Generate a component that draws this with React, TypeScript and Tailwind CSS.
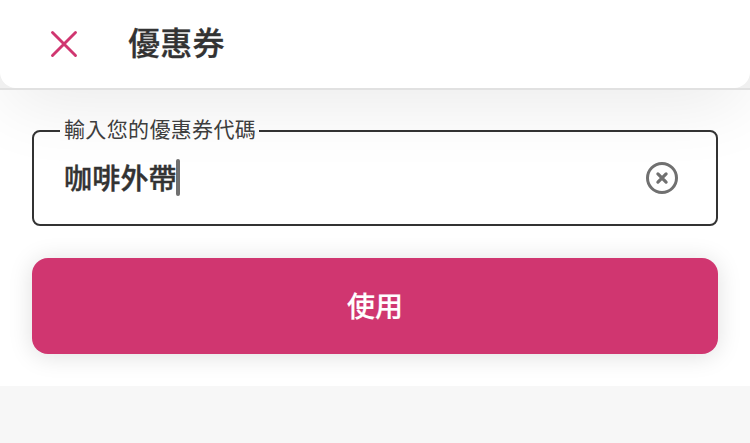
import { useState } from "react";

function CloseIcon() {
  return (
    <svg width="28" height="28" viewBox="0 0 28 28" fill="none" stroke="#d03670" strokeWidth="2.9" strokeLinecap="round">
      <path d="M2.5 2.5 25.5 25.5M25.5 2.5 2.5 25.5" />
    </svg>
  );
}

function ClearIcon() {
  return (
    <svg width="34" height="34" viewBox="0 0 34 34" fill="none" stroke="#707070" strokeWidth="3">
      <circle cx="17" cy="17" r="14.5" />
      <path strokeLinecap="round" strokeWidth="3.2" d="M12.9 12.9 21.1 21.1M21.1 12.9 12.9 21.1" />
    </svg>
  );
}

export default function App() {
  const [code, setCode] = useState("咖啡外帶");

  return (
    <div className="flex h-[443px] w-[750px] flex-col overflow-hidden bg-[#f7f7f7] font-['Noto_Sans_CJK_TC',sans-serif] text-[#333333]">
      <div className="relative z-10 h-[90px] shrink-0 border-b-2 border-[#e1e1e1] bg-[#f0f0f0] shadow-[0_20px_72px_-8px_rgba(0,0,0,0.09)]">
        <header className="flex h-[88px] items-center gap-[50px] rounded-b-2xl bg-white pl-[50px]">
          <button aria-label="關閉">
            <CloseIcon />
          </button>
          <h1 className="pb-[6px] text-[32px] leading-none font-medium tracking-[0.2px] [-webkit-text-stroke:0.3px_#333333]">優惠券</h1>
        </header>
      </div>

      <main className="h-[296px] shrink-0 bg-white px-8 pt-[29px]">
        <fieldset className="h-[107px] rounded-lg border-2 border-[#333333] pr-[37px] pl-[26px]">
          <legend className="h-6 pr-[3px] pl-1 text-[21px] leading-[19px] tracking-[0.35px] text-[#404040]">輸入您的優惠券代碼</legend>
          <div className="flex h-[69px] items-center justify-between">
            <div className="flex items-center pl-1">
              <span className="pb-[2px] text-[28px] leading-none font-medium tracking-[0.2px] [-webkit-text-stroke:0.4px_#333333]">{code}</span>
              {code && <span className="-ml-px h-[37px] w-1 rounded-sm bg-[#707070]" />}
            </div>
            <button onClick={() => setCode("")} aria-label="清除">
              <ClearIcon />
            </button>
          </div>
        </fieldset>

        <button className="mt-8 flex h-24 w-full items-center justify-center rounded-2xl bg-[#d03670] pb-[2px] text-[28px] font-medium text-white shadow-[0_2px_24px_rgba(0,0,0,0.13)] [-webkit-text-stroke:0.2px_white]">
          使用
        </button>
      </main>
    </div>
  );
}
